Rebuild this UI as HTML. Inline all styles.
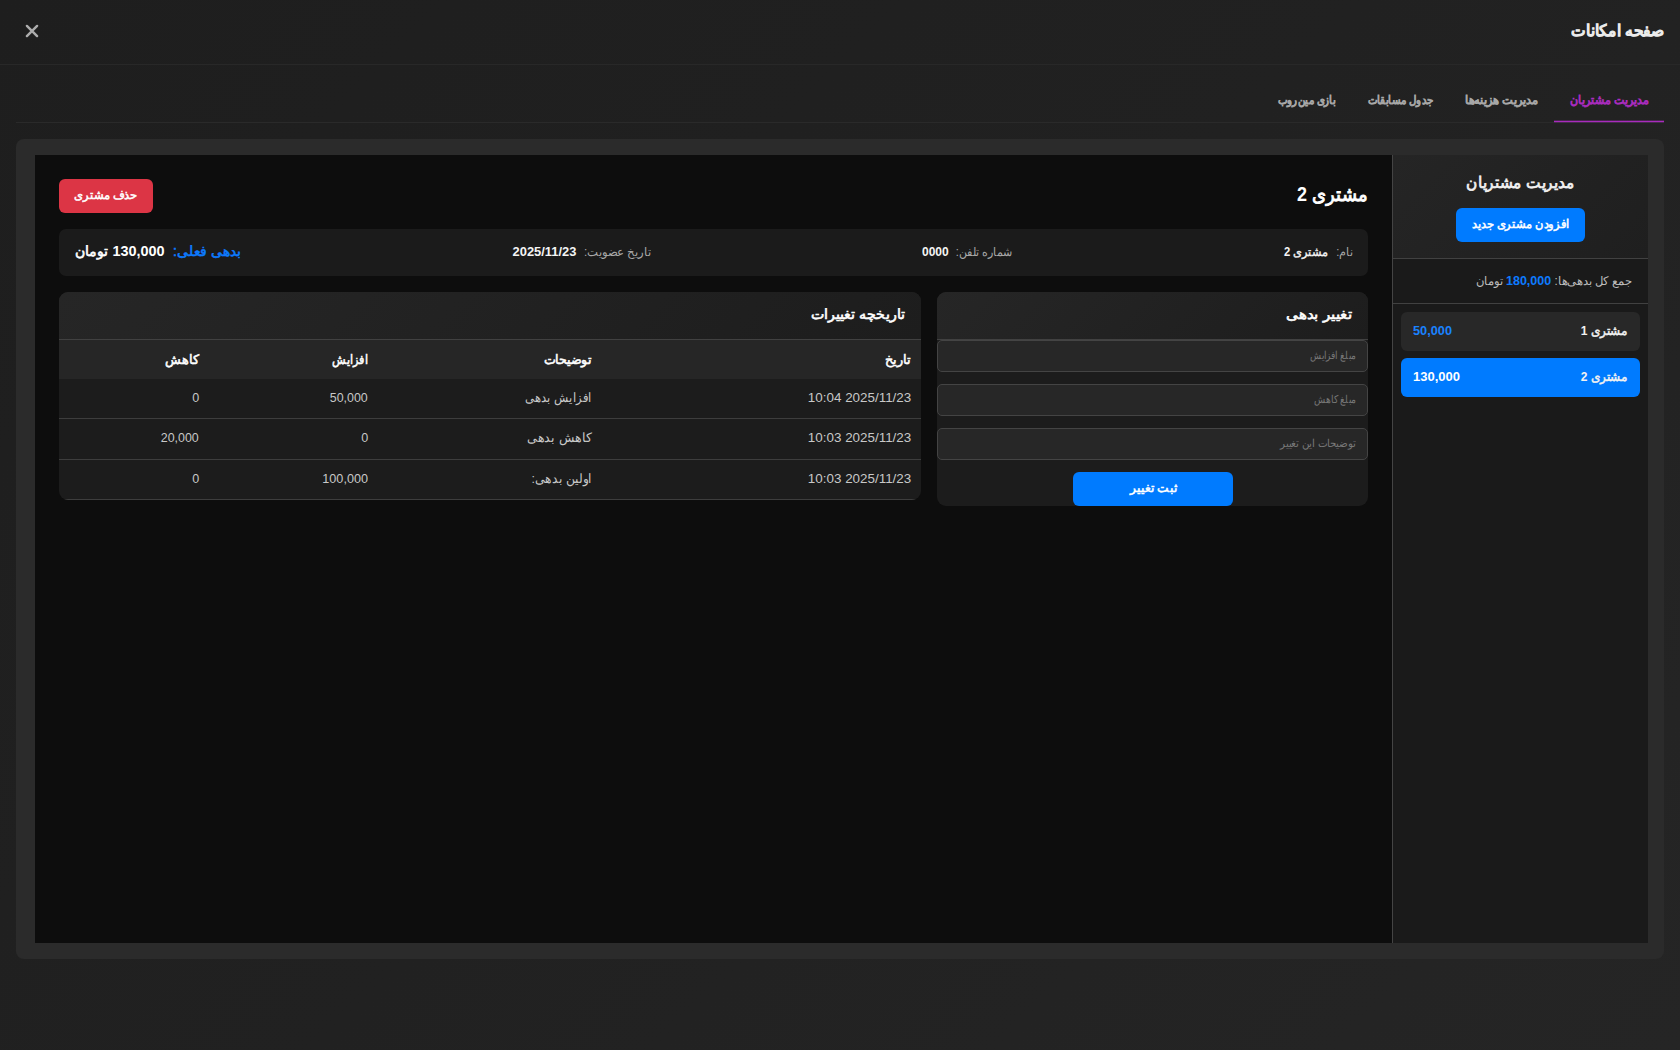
<!DOCTYPE html>
<html lang="fa" dir="rtl">
<head>
<meta charset="utf-8">
<title>صفحه امکانات</title>
<style>
*{box-sizing:border-box;margin:0;padding:0}
html,body{width:1680px;height:1050px;overflow:hidden}
body{background:linear-gradient(135deg,#1e1e1e 0%,#212121 50%,#252525 100%);color:#fff;font-family:"Liberation Sans",sans-serif;font-size:13px;direction:rtl;position:relative}
.abs{position:absolute}
.t{display:inline-block;white-space:nowrap;transform-origin:right center}
.t.c{transform-origin:center center}
.t.l{transform-origin:left center}
.ltr{direction:ltr;unicode-bidi:isolate}
/* Arabic glyphs come from a fallback face: emulate bold with a stroke so width is identical everywhere; digits use real bold */
.fb{font-weight:normal;-webkit-text-stroke:.045em currentColor}
.n{font-weight:bold;-webkit-text-stroke:0}
/* header */
#hdr{left:0;top:0;width:1680px;height:65px;border-bottom:1px solid #282828}
#ttlBox{right:16px;top:19px;height:24px;line-height:24px;font-size:16px;font-weight:normal;color:#ececec;white-space:nowrap;-webkit-text-stroke:1.25px currentColor}
#cls{left:25px;top:24px;width:14px;height:14px}
/* tabs */
#tabs{left:16px;top:80px;width:1648px;height:43px;border-bottom:1px solid #2a2a2a}
.tab{top:0;height:43px;line-height:40px;text-align:center;font-size:12px;font-weight:normal;color:#a9a9a9;white-space:nowrap;-webkit-text-stroke:.9px currentColor}
.tab.on{color:#a92cbe}
#uline{left:1538px;top:40px;width:110px;height:3px;background:linear-gradient(rgba(168,43,189,.3) 0 1px,#a82bbd 1px 2px,rgba(168,43,189,.25) 2px 3px)}
/* container */
#wrap{left:16px;top:139px;width:1648px;height:820px;background:#2b2b2b;border-radius:8px}
#main{left:35px;top:155px;width:1357px;height:788px;background:#0d0d0d}
#side{left:1392px;top:155px;width:256px;height:788px;background:#1a1a1a;border-left:1px solid #444}
/* sidebar */
#sideTop{left:1393px;top:155px;width:255px;height:104px;background:linear-gradient(135deg,#252525,#1f1f1f);border-bottom:1px solid #414141}
#sTitleBox{left:1393px;top:171px;width:255px;height:24px;line-height:24px;text-align:center;font-size:16px;font-weight:normal;-webkit-text-stroke:.7px currentColor;color:#f2f2f2;white-space:nowrap}
.btn{border-radius:6px;text-align:center;font-weight:normal;-webkit-text-stroke:.55px currentColor;color:#fff;white-space:nowrap}
#addBtn{left:1456px;top:208px;width:129px;height:34px;line-height:33px;background:#007bff;font-size:12px}
#sTotal{left:1393px;top:259px;width:255px;height:45px;line-height:43px;border-bottom:1px solid #414141;padding:0 16px;font-size:12px;color:#bdbdbd;white-space:nowrap;text-align:right}
#sTotal b{color:#0d7bff;font-size:13px}
.cust{left:1401px;width:239px;height:39px;border-radius:6px;background:#282828;font-size:13px;font-weight:normal;-webkit-text-stroke:.5px currentColor;color:#f2f2f2;white-space:nowrap}
.cust span{position:absolute;top:0;height:39px;line-height:38px}
.cust .nm{right:12px}
.cust .am{left:12px;color:#1a82ff;font-size:13px;direction:ltr;line-height:37px;font-weight:bold;-webkit-text-stroke:0}
.cust.on{background:#007bff}
.cust.on .am{color:#fff}
/* main */
#mTitleBox{right:312px;top:179px;height:30px;line-height:30px;font-size:20px;font-weight:normal;-webkit-text-stroke:.9px currentColor;color:#fff;white-space:nowrap}
#delBtn{left:59px;top:179px;width:94px;height:34px;line-height:33px;background:#dc3545;font-size:12px}
#info{left:59px;top:229px;width:1309px;height:47px;background:#1b1b1b;border-radius:7px}
.inf{top:229px;height:47px;line-height:47px;font-size:12px;color:#a8a8a8;white-space:nowrap}
.inf b{color:#f4f4f4;font-weight:bold;font-size:12px;margin-right:0}
.inf b.fb{font-weight:normal;-webkit-text-stroke:.4px currentColor}
.inf .t{position:absolute;top:0}
#infBox4{line-height:45px;font-size:14px;font-weight:normal;-webkit-text-stroke:.6px currentColor;color:#0d7bff}
#infBox4 b{font-size:14px;color:#fff}
#infBox4 #v4{font-weight:bold;-webkit-text-stroke:0}
#infBox4 #v5{font-weight:normal;-webkit-text-stroke:.6px currentColor}
.card{background:#1c1c1c;border-radius:9px;overflow:hidden}
.chead{left:0;top:0;width:100%;height:48px;line-height:44px;border-bottom:1px solid #414141;background:linear-gradient(135deg,#262626,#1d1d1d);padding:0 16px;text-align:right;font-size:14px;font-weight:normal;-webkit-text-stroke:.6px currentColor;color:#fff;white-space:nowrap}
#debt{left:937px;top:292px;width:431px;height:214px}
.inp{left:0;width:431px;height:32px;line-height:28px;border:1px solid #444;border-radius:5px;background:#272727;padding:0 11px;text-align:right;font-size:11px;color:#777;white-space:nowrap}
#subBtn{left:136px;top:180px;width:160px;height:34px;line-height:33px;background:#007bff;font-size:12px}
#hist{left:59px;top:292px;width:862px;height:208px}
.row{left:0;width:862px;height:40px;border-bottom:1px solid #3d3d3d;font-size:13px;color:#c8c8c8;white-space:nowrap}
.row.h{background:#262626;border-bottom:0;height:39px;color:#fff;font-weight:normal;-webkit-text-stroke:.55px currentColor;font-size:13px}
.row span{position:absolute;top:0;height:100%;line-height:38px;text-align:right}
.row.h span{line-height:39px}
.c1{right:10px}.c2{right:329px}.c3{right:553px}.c4{right:722px}
/* per-text horizontal fit */
#ttl{transform:scaleX(0.9642)}
#tb1{transform:scaleX(0.9248)}
#tb2{transform:scaleX(0.9497)}
#tb3{transform:scaleX(0.8514)}
#tb4{transform:scaleX(0.8538)}
#sTitle{transform:scaleX(0.9604)}
#addT{transform:scaleX(0.9540)}
#sTot{transform:scaleX(0.9648)}
#cn1{transform:scaleX(0.9241)}
#cn2{transform:scaleX(0.9241)}
#ca1{transform:scaleX(0.9807)}
#ca2{transform:scaleX(1.0000)}
#mTitle{transform:scaleX(0.8985)}
#delT{transform:scaleX(0.9565)}
#l1{transform:scaleX(0.9283)}
#v1{transform:scaleX(0.9377)}
#l2{transform:scaleX(0.9226)}
#v2{transform:scaleX(0.9999)}
#l3{transform:scaleX(0.9713)}
#v3{transform:scaleX(1.0740)}
#l4{transform:scaleX(0.9857)}
#v4{transform:scaleX(1.0314)}
#v5{transform:scaleX(1.0030)}
#ch1{transform:scaleX(1.0790)}
#ch2{transform:scaleX(1.0152)}
#ph1{transform:scaleX(0.8205)}
#ph2{transform:scaleX(0.8310)}
#ph3{transform:scaleX(0.9368)}
#subT{transform:scaleX(1.0142)}
#h1{transform:scaleX(0.9885)}
#h2{transform:scaleX(0.9700)}
#h3{transform:scaleX(0.8571)}
#h4{transform:scaleX(0.9912)}
#d1{transform:scaleX(1.0314)}
#d2{transform:scaleX(1.0314)}
#d3{transform:scaleX(1.0314)}
#x1{transform:scaleX(0.8951)}
#x2{transform:scaleX(0.9711)}
#x3{transform:scaleX(0.9465)}
#a1{transform:scaleX(0.9556)}
#a2{transform:scaleX(0.9676)}
#a3{transform:scaleX(0.9723)}
#k1{transform:scaleX(0.9676)}
#k2{transform:scaleX(0.9556)}
#k3{transform:scaleX(0.9676)}
</style>
</head>
<body>
<div id="hdr" class="abs"></div>
<div id="ttlBox" class="abs"><span class="t" id="ttl">صفحه امکانات</span></div>
<svg id="cls" class="abs" viewBox="0 0 14 14"><path d="M1.9 1.9 L12.1 12.1 M12.1 1.9 L1.9 12.1" stroke="#adadad" stroke-width="2.4" stroke-linecap="round" fill="none"/></svg>

<div id="tabs" class="abs">
  <div id="uline" class="abs"></div>
  <div class="tab on abs" style="left:1538px;width:110px"><span class="t c" id="tb1">مدیریت مشتریان</span></div>
  <div class="tab abs" style="left:1433px;width:105px"><span class="t c" id="tb2">مدیریت هزینه‌ها</span></div>
  <div class="tab abs" style="left:1336px;width:97px"><span class="t c" id="tb3">جدول مسابقات</span></div>
  <div class="tab abs" style="left:1246px;width:90px"><span class="t c" id="tb4">بازی مین‌روب</span></div>
</div>

<div id="wrap" class="abs"></div>
<div id="main" class="abs"></div>
<div id="side" class="abs"></div>

<div id="sideTop" class="abs"></div>
<div id="sTitleBox" class="abs"><span class="t c" id="sTitle">مدیریت مشتریان</span></div>
<div id="addBtn" class="abs btn"><span class="t c" id="addT">افزودن مشتری جدید</span></div>
<div id="sTotal" class="abs"><span class="t" id="sTot">جمع کل بدهی‌ها: <b>180,000</b> تومان</span></div>
<div class="cust abs" style="top:312px"><span class="nm t" id="cn1">مشتری <b class="n">1</b></span><span class="am t l" id="ca1">50,000</span></div>
<div class="cust on abs" style="top:358px"><span class="nm t" id="cn2">مشتری <b class="n">2</b></span><span class="am t l" id="ca2">130,000</span></div>

<div id="mTitleBox" class="abs"><span class="t" id="mTitle">مشتری <b class="n">2</b></span></div>
<div id="delBtn" class="abs btn"><span class="t c" id="delT">حذف مشتری</span></div>
<div id="info" class="abs"></div>
<div class="inf abs" style="left:59px;width:1309px">
  <span class="t" id="l1" style="right:16px">نام:</span><b class="t fb" id="v1" style="right:40px">مشتری <b class="n">2</b></b>
  <span class="t" id="l2" style="right:355px">شماره تلفن:</span><b class="t ltr" id="v2" style="right:419.5px">0000</b>
  <span class="t" id="l3" style="right:717.5px">تاریخ عضویت:</span><b class="t ltr" id="v3" style="right:792px">2025/11/23</b>
</div>
<div class="inf abs" id="infBox4" style="left:59px;width:400px">
  <span class="t" id="l4" style="right:218.3px">بدهی فعلی:</span><b class="t ltr" id="v4" style="right:294.7px">130,000</b><b class="t" id="v5" style="right:351.3px">تومان</b>
</div>

<div id="debt" class="abs card">
  <div class="chead abs"><span class="t" id="ch1">تغییر بدهی</span></div>
  <div class="inp abs" style="top:48px"><span class="t" id="ph1">مبلغ افزایش</span></div>
  <div class="inp abs" style="top:92px"><span class="t" id="ph2">مبلغ کاهش</span></div>
  <div class="inp abs" style="top:136px"><span class="t" id="ph3">توضیحات این تغییر</span></div>
  <div id="subBtn" class="abs btn"><span class="t c" id="subT">ثبت تغییر</span></div>
</div>

<div id="hist" class="abs card">
  <div class="chead abs"><span class="t" id="ch2">تاریخچه تغییرات</span></div>
  <div class="row h abs" style="top:48px"><span class="c1 t" id="h1">تاریخ</span><span class="c2 t" id="h2">توضیحات</span><span class="c3 t" id="h3">افزایش</span><span class="c4 t" id="h4">کاهش</span></div>
  <div class="row abs" style="top:87px"><span class="c1 t ltr" id="d1">10:04 2025/11/23</span><span class="c2 t" id="x1">افزایش بدهی</span><span class="c3 t" id="a1">50,000</span><span class="c4 t" id="k1">0</span></div>
  <div class="row abs" style="top:127px;height:41px"><span class="c1 t ltr" id="d2">10:03 2025/11/23</span><span class="c2 t" id="x2">کاهش بدهی</span><span class="c3 t" id="a2">0</span><span class="c4 t" id="k2">20,000</span></div>
  <div class="row abs" style="top:168px"><span class="c1 t ltr" id="d3">10:03 2025/11/23</span><span class="c2 t" id="x3">اولین بدهی:</span><span class="c3 t" id="a3">100,000</span><span class="c4 t" id="k3">0</span></div>
</div>
</body>
</html>
